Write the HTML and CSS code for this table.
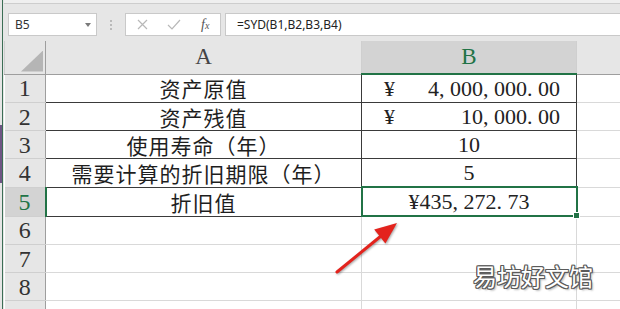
FILE: index.html
```html
<!DOCTYPE html>
<html lang="zh-CN">
<head>
<meta charset="utf-8">
<title>SYD</title>
<link rel="stylesheet" href="styles.css">
</head>
<body>
<div class="app">
  <div class="edge"></div>
  <div class="main">
    <div class="fbar">
      <div class="namebox"><span class="nb-text">B5</span><span class="dd"></span></div>
      <svg class="grip" width="4" height="12" viewBox="0 0 4 12"><circle cx="2" cy="2" r="1" /><circle cx="2" cy="6" r="1" /><circle cx="2" cy="10" r="1" /></svg>
      <div class="fnbox">
        <svg class="ico" width="11" height="11" viewBox="0 0 11 11"><path d="M1 1 L10 10 M10 1 L1 10" /></svg>
        <svg class="ico" width="14" height="11" viewBox="0 0 14 11"><path d="M1 6 L5 10 L13 1" /></svg>
        <span class="fx">f<span class="fx-x">x</span></span>
      </div>
      <div class="formula">=SYD(B1,B2,B3,B4)</div>
    </div>
    <div class="sheet">
      <table class="grid">
        <colgroup><col class="c-rh"><col class="c-a"><col class="c-b"><col class="c-c"></colgroup>
        <tr class="hrow">
          <td class="corner"><div class="tri"></div></td>
          <td class="ch">A</td>
          <td class="ch ch-sel">B</td>
          <td class="ch"></td>
        </tr>
        <tr><td class="rh">1</td><td class="t cn">资产原值</td><td class="t acct"><div class="acct-in"><span>¥</span><span>4<span class="pu">,</span>000<span class="pu">,</span>000<span class="pu">.</span>00</span></div></td><td></td></tr>
        <tr><td class="rh">2</td><td class="t cn">资产残值</td><td class="t acct"><div class="acct-in"><span>¥</span><span>10<span class="pu">,</span>000<span class="pu">.</span>00</span></div></td><td></td></tr>
        <tr><td class="rh">3</td><td class="t cn">使用寿命（年）</td><td class="t num">10</td><td></td></tr>
        <tr><td class="rh">4</td><td class="t cn">需要计算的折旧期限（年）</td><td class="t num">5</td><td></td></tr>
        <tr><td class="rh rh-sel">5</td><td class="t cn">折旧值</td><td class="t num sel">¥435<span class="pu">,</span>272<span class="pu">.</span>73<span class="handle"></span></td><td></td></tr>
        <tr><td class="rh">6</td><td></td><td></td><td></td></tr>
        <tr><td class="rh">7</td><td></td><td></td><td></td></tr>
        <tr><td class="rh">8</td><td></td><td></td><td></td></tr>
        <tr><td class="rh"></td><td></td><td></td><td></td></tr>
      </table>
      <svg class="arrow" width="616" height="268" viewBox="0 0 616 268">
        <path class="arr-line" d="M333 231 L377 195" />
        <path class="arr-head" d="M393 182 L381.4 202.6 L370.2 188.6 Z" />
      </svg>
      <div class="wm">易坊好文馆</div>
    </div>
  </div>
</div>
</body>
</html>
```

FILE: styles.css
```css
html, body {
  margin: 0;
  padding: 0;
}
body {
  width: 620px;
  height: 309px;
  overflow: hidden;
  background: #e6e6e6;
  font-family: "Noto Sans", "Noto Sans CJK SC", sans-serif;
}
.app {
  display: flex;
  height: 309px;
}
.edge {
  width: 4px;
  flex: none;
  background:
    linear-gradient(#6e5684, #6e5684) 0 125px / 2px 58px no-repeat,
    linear-gradient(to right, transparent 2px, #3c6e55 2px, #3c6e55 3px, transparent 3px),
    #e6e6e6;
}
.main {
  flex: 1;
  min-width: 0;
  display: flex;
  flex-direction: column;
}
.fbar {
  height: 41px;
  box-sizing: border-box;
  padding: 13px 0 5px 4px;
  display: flex;
  align-items: stretch;
  background: linear-gradient(#efefef 0 3px, #cdcdcd 3px 4px, #e6e6e6 4px);
}
.namebox {
  width: 89px;
  box-sizing: border-box;
  background: #fff;
  border: 1px solid #c9c9c9;
  display: flex;
  align-items: center;
  justify-content: space-between;
  padding: 0 5px 0 6px;
  font-size: 12px;
  color: #333;
}
.dd {
  width: 0;
  height: 0;
  border-left: 3.5px solid transparent;
  border-right: 3.5px solid transparent;
  border-top: 4px solid #7a7a7a;
}
.grip {
  align-self: center;
  margin: 0 12px 0 12px;
  fill: #ababab;
}
.fnbox {
  width: 96px;
  box-sizing: border-box;
  background: #fff;
  border: 1px solid #c9c9c9;
  display: flex;
  align-items: center;
  padding-left: 11px;
  margin-right: 4px;
}
.ico {
  fill: none;
  stroke: #b8b8b8;
  stroke-width: 1.2;
}
.ico + .ico {
  margin-left: 19px;
}
.fx {
  margin-left: 20px;
  font-family: "Liberation Serif", serif;
  font-style: italic;
  font-size: 14px;
  color: #555;
}
.fx-x {
  font-size: 10px;
}
.formula {
  flex: 1;
  background: #fff;
  border: 1px solid #c9c9c9;
  border-right: none;
  display: flex;
  align-items: center;
  padding-left: 11px;
  font-size: 12px;
  color: #222;
}
.sheet {
  position: relative;
  flex: 1;
  overflow: hidden;
  background: #fff;
}
.grid {
  border-collapse: collapse;
  table-layout: fixed;
  width: 616px;
}
.c-rh { width: 41px; }
.c-a { width: 316px; }
.c-b { width: 215px; }
.c-c { width: 44px; }
.grid td {
  height: 27px;
  padding: 0;
  border: 1px solid #d9d9d9;
  text-align: center;
  vertical-align: middle;
  font-family: "Liberation Serif", "Noto Sans CJK SC", serif;
  font-size: 22px;
  color: #222;
  line-height: 26px;
  overflow: hidden;
  white-space: nowrap;
}
.grid .hrow td {
  height: 32px;
  background: #e6e6e6;
  border: 1px solid #cfcfcf;
  border-top: none;
  border-bottom: 1px solid #9e9e9e;
  font-size: 23px;
  color: #444;
}
.grid .hrow td.ch-sel {
  background: #d3d3d3;
  color: #217346;
  border-bottom: 2px solid #217346;
}
.grid td.corner {
  border-right: 1px solid #9e9e9e;
  vertical-align: bottom;
}
.tri {
  width: 22px;
  height: 21px;
  margin: 0 2px 2px auto;
  background: #b5b5b5;
  clip-path: polygon(100% 0, 100% 100%, 0 100%);
}
.grid td.rh {
  background: #e6e6e6;
  border: 1px solid #cfcfcf;
  border-left: none;
  border-right: 1px solid #9e9e9e;
  font-size: 24px;
  color: #333;
}
.grid td.rh-sel {
  background: #d3d3d3;
  color: #217346;
  border-right: 2px solid #217346;
}
.grid td.t {
  border: 1px solid #3a3a3a;
}
.grid td.cn {
  font-family: "Noto Sans CJK SC", sans-serif;
  font-size: 21px;
  letter-spacing: 1px;
  color: #1e1e1e;
}
.grid td.num {
  font-size: 22px;
}
.pu {
  display: inline-block;
  width: 0.5em;
  text-align: left;
}
.acct-in {
  display: flex;
  justify-content: space-between;
  padding: 0 16px 0 22px;
}
.grid td.sel {
  position: relative;
  border: 2px solid #217346;
  overflow: visible;
}
.handle {
  position: absolute;
  right: -4px;
  bottom: -4px;
  width: 5px;
  height: 5px;
  background: #217346;
  border: 1px solid #fff;
}
.arrow {
  position: absolute;
  left: 0;
  top: 0;
  filter: drop-shadow(1px 1px 1px rgba(0,0,0,0.35));
}
.arr-line {
  stroke: #e3231d;
  stroke-width: 3;
  stroke-linecap: round;
  fill: none;
}
.arr-head {
  fill: #e3231d;
}
.wm {
  position: absolute;
  left: 469px;
  top: 223px;
  font-family: "Noto Sans CJK SC", sans-serif;
  font-size: 24px;
  line-height: 24px;
  color: #fff;
  text-shadow:
    1px 0 #5a5a5a, -1px 0 #5a5a5a, 0 1px #5a5a5a, 0 -1px #5a5a5a,
    1px 1px #5a5a5a, -1px -1px #5a5a5a, 1px -1px #5a5a5a, -1px 1px #5a5a5a,
    2px 2px 2px rgba(0,0,0,0.3);
}
```
